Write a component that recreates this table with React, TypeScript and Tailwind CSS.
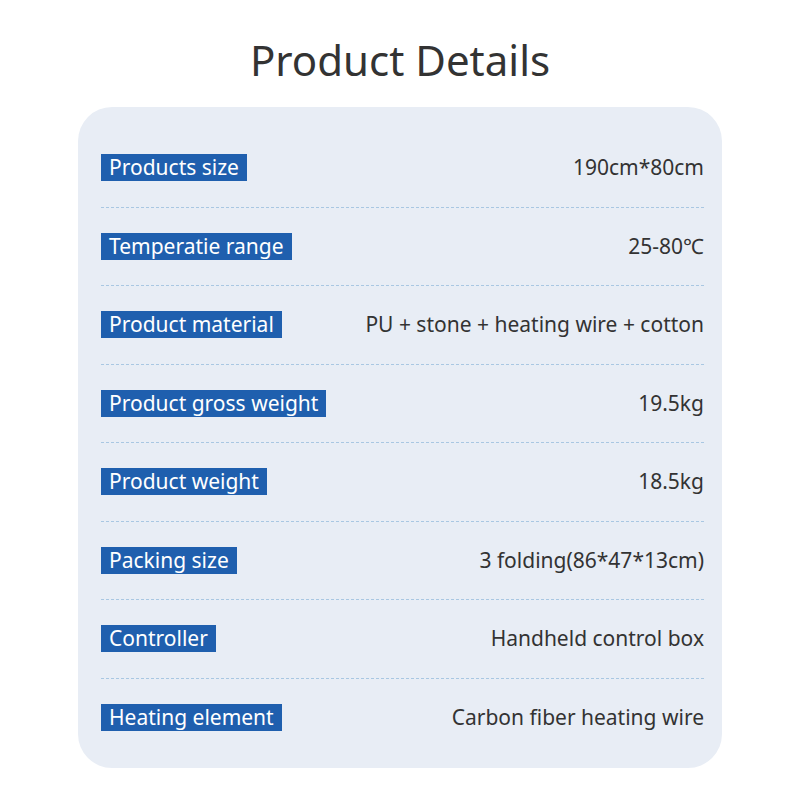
const ROWS = [
  { label: 'Products size', value: '190cm*80cm' },
  { label: 'Temperatie range', value: '25-80℃' },
  { label: 'Product material', value: 'PU + stone + heating wire + cotton' },
  { label: 'Product gross weight', value: '19.5kg' },
  { label: 'Product weight', value: '18.5kg' },
  { label: 'Packing size', value: '3 folding(86*47*13cm)' },
  { label: 'Controller', value: 'Handheld control box' },
  { label: 'Heating element', value: 'Carbon fiber heating wire' },
];

export default function App() {
  return (
    <div
      className="w-[800px] h-[800px] bg-white flex flex-col items-center"
      style={{ fontFamily: '"Noto Sans", "Open Sans", sans-serif' }}
    >
      <h1 className="mt-[28px] h-[64px] text-[42px] leading-[64px] text-[#333333]">
        Product Details
      </h1>

      <div className="mt-[15px] w-[644px] h-[661px] bg-[#e8edf5] rounded-[34px] pl-[23px] pr-[18px] pt-[22px]">
        {ROWS.map((row, i) => (
          <div
            key={row.label}
            className={`h-[78.5px] flex items-center justify-between ${
              i < ROWS.length - 1 ? 'border-b border-dashed border-[#a9c7e2]' : ''
            }`}
          >
            <span className="bg-[#1f5fae] text-white text-[21px] leading-[27px] h-[27px] px-[8px]">
              {row.label}
            </span>
            <span className="text-[#333333] text-[21px] leading-[27px]">{row.value}</span>
          </div>
        ))}
      </div>
    </div>
  );
}
